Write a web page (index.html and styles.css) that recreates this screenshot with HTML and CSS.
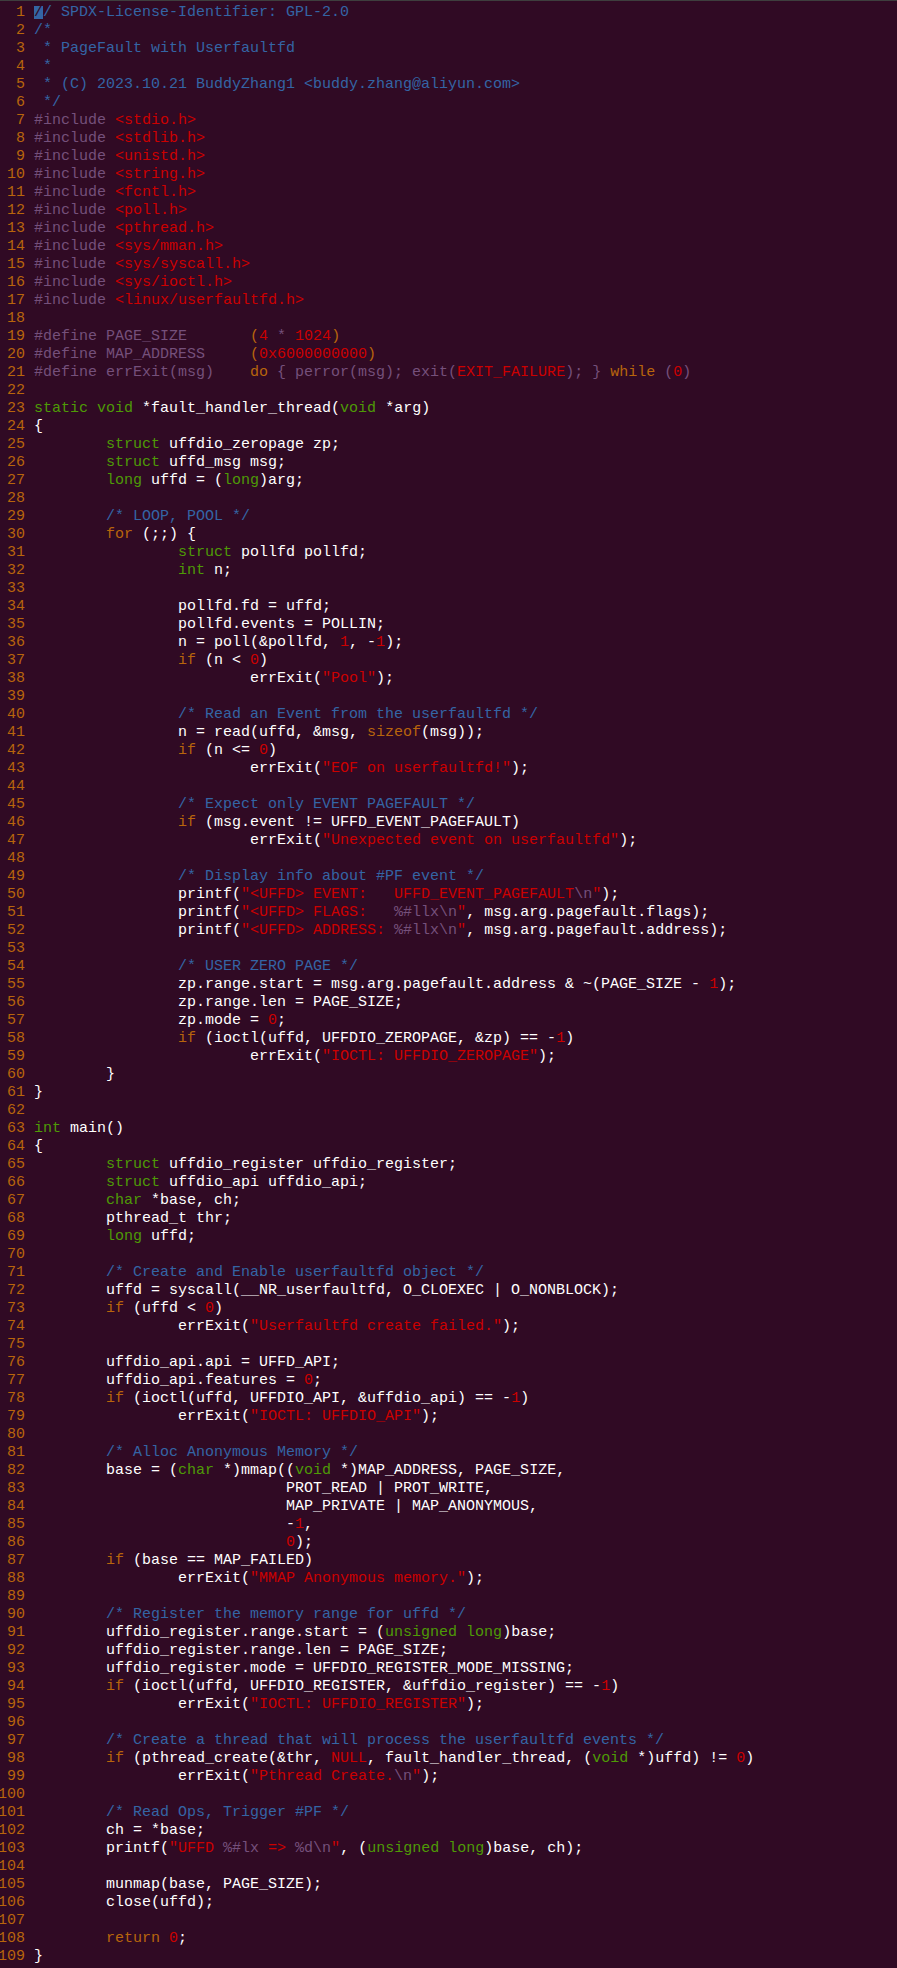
FILE: index.html
```html
<!DOCTYPE html>
<html>
<head>
<meta charset="utf-8">
<link rel="stylesheet" href="styles.css">
</head>
<body>
<pre class="code"><span class="n">  1 </span><span class="c"><span class="cur">/</span>/ SPDX-License-Identifier: GPL-2.0</span>
<span class="n">  2 </span><span class="c">/*</span>
<span class="n">  3 </span><span class="c"> * PageFault with Userfaultfd</span>
<span class="n">  4 </span><span class="c"> *</span>
<span class="n">  5 </span><span class="c"> * (C) 2023.10.21 BuddyZhang1 &lt;buddy.zhang@aliyun.com&gt;</span>
<span class="n">  6 </span><span class="c"> */</span>
<span class="n">  7 </span><span class="p">#include </span><span class="s">&lt;stdio.h&gt;</span>
<span class="n">  8 </span><span class="p">#include </span><span class="s">&lt;stdlib.h&gt;</span>
<span class="n">  9 </span><span class="p">#include </span><span class="s">&lt;unistd.h&gt;</span>
<span class="n"> 10 </span><span class="p">#include </span><span class="s">&lt;string.h&gt;</span>
<span class="n"> 11 </span><span class="p">#include </span><span class="s">&lt;fcntl.h&gt;</span>
<span class="n"> 12 </span><span class="p">#include </span><span class="s">&lt;poll.h&gt;</span>
<span class="n"> 13 </span><span class="p">#include </span><span class="s">&lt;pthread.h&gt;</span>
<span class="n"> 14 </span><span class="p">#include </span><span class="s">&lt;sys/mman.h&gt;</span>
<span class="n"> 15 </span><span class="p">#include </span><span class="s">&lt;sys/syscall.h&gt;</span>
<span class="n"> 16 </span><span class="p">#include </span><span class="s">&lt;sys/ioctl.h&gt;</span>
<span class="n"> 17 </span><span class="p">#include </span><span class="s">&lt;linux/userfaultfd.h&gt;</span>
<span class="n"> 18 </span>
<span class="n"> 19 </span><span class="p">#define PAGE_SIZE       </span><span class="k">(</span><span class="s">4</span><span class="p"> * </span><span class="s">1024</span><span class="k">)</span>
<span class="n"> 20 </span><span class="p">#define MAP_ADDRESS     </span><span class="k">(</span><span class="s">0x6000000000</span><span class="k">)</span>
<span class="n"> 21 </span><span class="p">#define errExit(msg)    </span><span class="k">do</span><span class="p"> { perror(msg); exit(</span><span class="s">EXIT_FAILURE</span><span class="p">); } </span><span class="k">while</span><span class="p"> (</span><span class="s">0</span><span class="p">)</span>
<span class="n"> 22 </span>
<span class="n"> 23 </span><span class="t">static</span> <span class="t">void</span> *fault_handler_thread(<span class="t">void</span> *arg)
<span class="n"> 24 </span>{
<span class="n"> 25 </span>        <span class="t">struct</span> uffdio_zeropage zp;
<span class="n"> 26 </span>        <span class="t">struct</span> uffd_msg msg;
<span class="n"> 27 </span>        <span class="t">long</span> uffd = (<span class="t">long</span>)arg;
<span class="n"> 28 </span>
<span class="n"> 29 </span>        <span class="c">/* LOOP, POOL */</span>
<span class="n"> 30 </span>        <span class="k">for</span> (;;) {
<span class="n"> 31 </span>                <span class="t">struct</span> pollfd pollfd;
<span class="n"> 32 </span>                <span class="t">int</span> n;
<span class="n"> 33 </span>
<span class="n"> 34 </span>                pollfd.fd = uffd;
<span class="n"> 35 </span>                pollfd.events = POLLIN;
<span class="n"> 36 </span>                n = poll(&amp;pollfd, <span class="s">1</span>, -<span class="s">1</span>);
<span class="n"> 37 </span>                <span class="k">if</span> (n &lt; <span class="s">0</span>)
<span class="n"> 38 </span>                        errExit(<span class="s">"Pool"</span>);
<span class="n"> 39 </span>
<span class="n"> 40 </span>                <span class="c">/* Read an Event from the userfaultfd */</span>
<span class="n"> 41 </span>                n = read(uffd, &amp;msg, <span class="k">sizeof</span>(msg));
<span class="n"> 42 </span>                <span class="k">if</span> (n &lt;= <span class="s">0</span>)
<span class="n"> 43 </span>                        errExit(<span class="s">"EOF on userfaultfd!"</span>);
<span class="n"> 44 </span>
<span class="n"> 45 </span>                <span class="c">/* Expect only EVENT PAGEFAULT */</span>
<span class="n"> 46 </span>                <span class="k">if</span> (msg.event != UFFD_EVENT_PAGEFAULT)
<span class="n"> 47 </span>                        errExit(<span class="s">"Unexpected event on userfaultfd"</span>);
<span class="n"> 48 </span>
<span class="n"> 49 </span>                <span class="c">/* Display info about #PF event */</span>
<span class="n"> 50 </span>                printf(<span class="s">"&lt;UFFD&gt; EVENT:   UFFD_EVENT_PAGEFAULT<span class="x">\n</span>"</span>);
<span class="n"> 51 </span>                printf(<span class="s">"&lt;UFFD&gt; FLAGS:   <span class="x">%#llx\n</span>"</span>, msg.arg.pagefault.flags);
<span class="n"> 52 </span>                printf(<span class="s">"&lt;UFFD&gt; ADDRESS: <span class="x">%#llx\n</span>"</span>, msg.arg.pagefault.address);
<span class="n"> 53 </span>
<span class="n"> 54 </span>                <span class="c">/* USER ZERO PAGE */</span>
<span class="n"> 55 </span>                zp.range.start = msg.arg.pagefault.address &amp; ~(PAGE_SIZE - <span class="s">1</span>);
<span class="n"> 56 </span>                zp.range.len = PAGE_SIZE;
<span class="n"> 57 </span>                zp.mode = <span class="s">0</span>;
<span class="n"> 58 </span>                <span class="k">if</span> (ioctl(uffd, UFFDIO_ZEROPAGE, &amp;zp) == -<span class="s">1</span>)
<span class="n"> 59 </span>                        errExit(<span class="s">"IOCTL: UFFDIO_ZEROPAGE"</span>);
<span class="n"> 60 </span>        }
<span class="n"> 61 </span>}
<span class="n"> 62 </span>
<span class="n"> 63 </span><span class="t">int</span> main()
<span class="n"> 64 </span>{
<span class="n"> 65 </span>        <span class="t">struct</span> uffdio_register uffdio_register;
<span class="n"> 66 </span>        <span class="t">struct</span> uffdio_api uffdio_api;
<span class="n"> 67 </span>        <span class="t">char</span> *base, ch;
<span class="n"> 68 </span>        pthread_t thr;
<span class="n"> 69 </span>        <span class="t">long</span> uffd;
<span class="n"> 70 </span>
<span class="n"> 71 </span>        <span class="c">/* Create and Enable userfaultfd object */</span>
<span class="n"> 72 </span>        uffd = syscall(__NR_userfaultfd, O_CLOEXEC | O_NONBLOCK);
<span class="n"> 73 </span>        <span class="k">if</span> (uffd &lt; <span class="s">0</span>)
<span class="n"> 74 </span>                errExit(<span class="s">"Userfaultfd create failed."</span>);
<span class="n"> 75 </span>
<span class="n"> 76 </span>        uffdio_api.api = UFFD_API;
<span class="n"> 77 </span>        uffdio_api.features = <span class="s">0</span>;
<span class="n"> 78 </span>        <span class="k">if</span> (ioctl(uffd, UFFDIO_API, &amp;uffdio_api) == -<span class="s">1</span>)
<span class="n"> 79 </span>                errExit(<span class="s">"IOCTL: UFFDIO_API"</span>);
<span class="n"> 80 </span>
<span class="n"> 81 </span>        <span class="c">/* Alloc Anonymous Memory */</span>
<span class="n"> 82 </span>        base = (<span class="t">char</span> *)mmap((<span class="t">void</span> *)MAP_ADDRESS, PAGE_SIZE,
<span class="n"> 83 </span>                            PROT_READ | PROT_WRITE,
<span class="n"> 84 </span>                            MAP_PRIVATE | MAP_ANONYMOUS,
<span class="n"> 85 </span>                            -<span class="s">1</span>,
<span class="n"> 86 </span>                            <span class="s">0</span>);
<span class="n"> 87 </span>        <span class="k">if</span> (base == MAP_FAILED)
<span class="n"> 88 </span>                errExit(<span class="s">"MMAP Anonymous memory."</span>);
<span class="n"> 89 </span>
<span class="n"> 90 </span>        <span class="c">/* Register the memory range for uffd */</span>
<span class="n"> 91 </span>        uffdio_register.range.start = (<span class="t">unsigned</span> <span class="t">long</span>)base;
<span class="n"> 92 </span>        uffdio_register.range.len = PAGE_SIZE;
<span class="n"> 93 </span>        uffdio_register.mode = UFFDIO_REGISTER_MODE_MISSING;
<span class="n"> 94 </span>        <span class="k">if</span> (ioctl(uffd, UFFDIO_REGISTER, &amp;uffdio_register) == -<span class="s">1</span>)
<span class="n"> 95 </span>                errExit(<span class="s">"IOCTL: UFFDIO_REGISTER"</span>);
<span class="n"> 96 </span>
<span class="n"> 97 </span>        <span class="c">/* Create a thread that will process the userfaultfd events */</span>
<span class="n"> 98 </span>        <span class="k">if</span> (pthread_create(&amp;thr, <span class="s">NULL</span>, fault_handler_thread, (<span class="t">void</span> *)uffd) != <span class="s">0</span>)
<span class="n"> 99 </span>                errExit(<span class="s">"Pthread Create.<span class="x">\n</span>"</span>);
<span class="n">100 </span>
<span class="n">101 </span>        <span class="c">/* Read Ops, Trigger #PF */</span>
<span class="n">102 </span>        ch = *base;
<span class="n">103 </span>        printf(<span class="s">"UFFD <span class="x">%#lx</span> =&gt; <span class="x">%d\n</span>"</span>, (<span class="t">unsigned</span> <span class="t">long</span>)base, ch);
<span class="n">104 </span>
<span class="n">105 </span>        munmap(base, PAGE_SIZE);
<span class="n">106 </span>        close(uffd);
<span class="n">107 </span>
<span class="n">108 </span>        <span class="k">return</span> <span class="s">0</span>;
<span class="n">109 </span>}</pre>
</body>
</html>
```
FILE: styles.css
```css
html, body {
  margin: 0;
  padding: 0;
  background: #300a24;
}

body {
  border-top: 1px solid #3e3e3e;
  min-height: 1967px;
}

.code {
  margin: 0 0 0 -2px;
  padding: 3px 0 0 0;
  font-family: "Liberation Mono", "DejaVu Sans Mono", monospace;
  font-size: 15px;
  line-height: 18px;
  color: #ffffff;
  white-space: pre;
}

.n { color: #b8650c; }
.c { color: #3465a4; }
.p { color: #75507b; }
.s { color: #cc0000; }
.k { color: #b8650c; }
.t { color: #4e9a06; }
.x { color: #75507b; }

.cur {
  display: inline-block;
  line-height: 13px;
  background: #3465a4;
  color: #300a24;
}
```
